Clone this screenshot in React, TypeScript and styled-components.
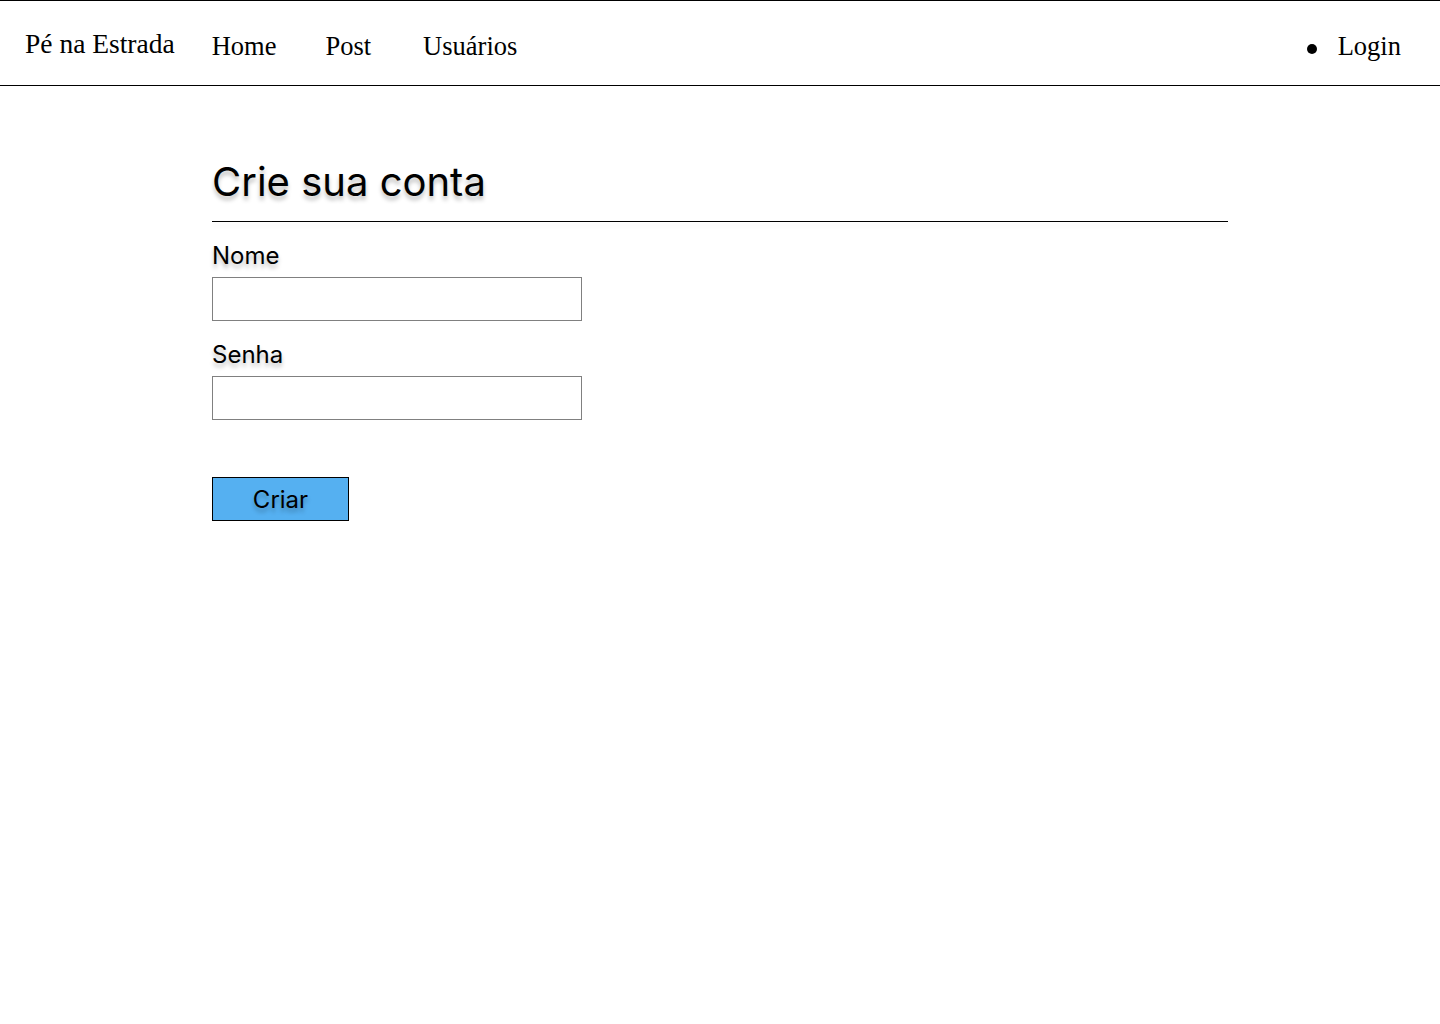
import React from 'react';
import styled, { createGlobalStyle } from 'styled-components';

const GlobalStyle = createGlobalStyle`
  * {
    box-sizing: border-box;
  }
  body {
    margin: 0;
    background: #ffffff;
    color: #000000;
    font-family: 'Inter', 'Liberation Sans', sans-serif;
  }
`;

const Header = styled.header`
  display: flex;
  align-items: center;
  justify-content: space-between;
  height: 86px;
  padding: 7px 39px 0 25px;
  border-top: 1px solid #000;
  border-bottom: 1px solid #000;
  font-family: 'Liberation Serif', 'DejaVu Serif', serif;
`;

const NavLeft = styled.nav`
  display: flex;
  align-items: center;
`;

const Brand = styled.a`
  font-size: 27.5px;
  margin-right: 37px;
  margin-top: -5px;
  color: #000;
  text-decoration: none;
`;

const NavLink = styled.a<{ $gap?: number }>`
  font-size: 26.5px;
  margin-right: ${(p) => p.$gap ?? 0}px;
  color: #000;
  text-decoration: none;
`;

const LoginItem = styled.a`
  display: flex;
  align-items: center;
  gap: 21px;
  font-size: 26.5px;
  color: #000;
  text-decoration: none;
  &::before {
    content: '';
    width: 10px;
    height: 10px;
    border-radius: 50%;
    background: #000;
    margin-top: 4px;
  }
`;

const Main = styled.main`
  width: 1016px;
  margin: 0 auto;
  padding-top: 72px;
`;

const Title = styled.h1`
  margin: 0;
  font-size: 40px;
  font-weight: 400;
  line-height: 48px;
  padding-bottom: 15px;
  text-shadow: 0 4px 4px rgba(0, 0, 0, 0.25);
`;

const Divider = styled.hr`
  margin: 0;
  height: 1px;
  border: none;
  background: #000;
  box-shadow: 0 4px 4px rgba(0, 0, 0, 0.07);
`;

const Form = styled.form`
  display: flex;
  flex-direction: column;
  padding-top: 20px;
`;

const Label = styled.label`
  font-size: 24px;
  line-height: 28px;
  margin-bottom: 7px;
  text-shadow: 0 4px 4px rgba(0, 0, 0, 0.25);
`;

const Input = styled.input`
  width: 370px;
  height: 44px;
  border: 1px solid #808080;
  border-radius: 0;
  margin-bottom: 20px;
  padding: 0 10px;
  font-size: 18px;
  font-family: inherit;
`;

const Button = styled.button`
  width: 137px;
  height: 44px;
  margin-top: 37px;
  background: #55b0f1;
  border: 1px solid #000;
  border-radius: 0;
  font-family: 'Inter', 'Liberation Sans', sans-serif;
  font-size: 24px;
  color: #000;
  text-shadow: 0 4px 4px rgba(0, 0, 0, 0.25);
  cursor: pointer;
`;

export default function App() {
  return (
    <>
      <GlobalStyle />
      <Header>
        <NavLeft>
          <Brand href="#">Pé na Estrada</Brand>
          <NavLink href="#" $gap={49}>Home</NavLink>
          <NavLink href="#" $gap={52}>Post</NavLink>
          <NavLink href="#">Usuários</NavLink>
        </NavLeft>
        <LoginItem href="#">Login</LoginItem>
      </Header>
      <Main>
        <Title>Crie sua conta</Title>
        <Divider />
        <Form onSubmit={(e) => e.preventDefault()}>
          <Label htmlFor="nome">Nome</Label>
          <Input id="nome" type="text" />
          <Label htmlFor="senha">Senha</Label>
          <Input id="senha" type="password" />
          <div>
            <Button type="submit">Criar</Button>
          </div>
        </Form>
      </Main>
    </>
  );
}
